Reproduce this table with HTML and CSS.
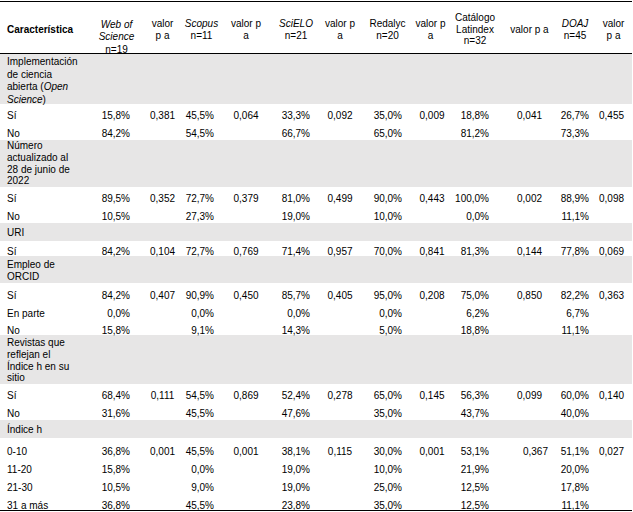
FILE: index.html
```html
<!DOCTYPE html>
<html lang="es">
<head>
<meta charset="utf-8">
<title>Características de las revistas</title>
<link rel="stylesheet" href="styles.css">
</head>
<body>
<table class="tbl">
  <colgroup>
    <col class="c1"><col class="c2"><col class="c3"><col class="c4"><col class="c5"><col class="c6"><col class="c7"><col class="c8"><col class="c9"><col class="c10"><col class="c11"><col class="c12"><col class="c13">
  </colgroup>
  <thead>
    <tr>
      <th class="first">Característica</th>
      <th class="wos"><span class="wos-in"><i>Web of</i><br><i>Science</i><br>n=19</span></th>
      <th>valor<br>p a</th>
      <th><i>Scopus</i><br>n=11</th>
      <th>valor p<br>a</th>
      <th><i>SciELO</i><br>n=21</th>
      <th>valor p<br>a</th>
      <th>Redalyc<br>n=20</th>
      <th>valor p<br>a</th>
      <th>Catálogo<br>Latindex<br>n=32</th>
      <th>valor p a</th>
      <th><i>DOAJ</i><br>n=45</th>
      <th>valor<br>p a</th>
    </tr>
  </thead>
  <tbody>
    <tr class="g"><td class="lbl lbl-os"><span class="os-in">Implementación<br>de ciencia<br>abierta (<i>Open</i><br><i>Science</i>)</span></td><td colspan="12"></td></tr>
    <tr class="d"><td>Sí</td><td>15,8%</td><td>0,381</td><td>45,5%</td><td>0,064</td><td>33,3%</td><td>0,092</td><td>35,0%</td><td>0,009</td><td>18,8%</td><td>0,041</td><td>26,7%</td><td>0,455</td></tr>
    <tr class="d"><td>No</td><td>84,2%</td><td></td><td>54,5%</td><td></td><td>66,7%</td><td></td><td>65,0%</td><td></td><td>81,2%</td><td></td><td>73,3%</td><td></td></tr>

    <tr class="g"><td class="lbl">Número actualizado al 28 de junio de 2022</td><td colspan="12"></td></tr>
    <tr class="d"><td>Sí</td><td>89,5%</td><td>0,352</td><td>72,7%</td><td>0,379</td><td>81,0%</td><td>0,499</td><td>90,0%</td><td>0,443</td><td>100,0%</td><td>0,002</td><td>88,9%</td><td>0,098</td></tr>
    <tr class="d"><td>No</td><td>10,5%</td><td></td><td>27,3%</td><td></td><td>19,0%</td><td></td><td>10,0%</td><td></td><td>0,0%</td><td></td><td>11,1%</td><td></td></tr>

    <tr class="g"><td class="lbl pt1">URI</td><td colspan="12"></td></tr>
    <tr class="d short low"><td>Sí</td><td>84,2%</td><td>0,104</td><td>72,7%</td><td>0,769</td><td>71,4%</td><td>0,957</td><td>70,0%</td><td>0,841</td><td>81,3%</td><td>0,144</td><td>77,8%</td><td>0,069</td></tr>

    <tr class="g"><td class="lbl pt3">Empleo de ORCID</td><td colspan="12"></td></tr>
    <tr class="d mid low"><td>Sí</td><td>84,2%</td><td>0,407</td><td>90,9%</td><td>0,450</td><td>85,7%</td><td>0,405</td><td>95,0%</td><td>0,208</td><td>75,0%</td><td>0,850</td><td>82,2%</td><td>0,363</td></tr>
    <tr class="d mid low"><td>En parte</td><td>0,0%</td><td></td><td>0,0%</td><td></td><td>0,0%</td><td></td><td>0,0%</td><td></td><td>6,2%</td><td></td><td>6,7%</td><td></td></tr>
    <tr class="d mid low"><td>No</td><td>15,8%</td><td></td><td>9,1%</td><td></td><td>14,3%</td><td></td><td>5,0%</td><td></td><td>18,8%</td><td></td><td>11,1%</td><td></td></tr>

    <tr class="g"><td class="lbl pt2">Revistas que reflejan el Índice h en su sitio</td><td colspan="12"></td></tr>
    <tr class="d"><td>Sí</td><td>68,4%</td><td>0,111</td><td>54,5%</td><td>0,869</td><td>52,4%</td><td>0,278</td><td>65,0%</td><td>0,145</td><td>56,3%</td><td>0,099</td><td>60,0%</td><td>0,140</td></tr>
    <tr class="d mid"><td>No</td><td>31,6%</td><td></td><td>45,5%</td><td></td><td>47,6%</td><td></td><td>35,0%</td><td></td><td>43,7%</td><td></td><td>40,0%</td><td></td></tr>

    <tr class="g"><td class="lbl pt3">Índice h</td><td colspan="12"></td></tr>
    <tr class="d low"><td>0-10</td><td>36,8%</td><td>0,001</td><td>45,5%</td><td>0,001</td><td>38,1%</td><td>0,115</td><td>30,0%</td><td>0,001</td><td>53,1%</td><td class="r">0,367</td><td>51,1%</td><td>0,027</td></tr>
    <tr class="d low"><td>11-20</td><td>15,8%</td><td></td><td>0,0%</td><td></td><td>19,0%</td><td></td><td>10,0%</td><td></td><td>21,9%</td><td></td><td>20,0%</td><td></td></tr>
    <tr class="d low"><td>21-30</td><td>10,5%</td><td></td><td>9,0%</td><td></td><td>19,0%</td><td></td><td>25,0%</td><td></td><td>12,5%</td><td></td><td>17,8%</td><td></td></tr>
    <tr class="d low last"><td>31 a más</td><td>36,8%</td><td></td><td>45,5%</td><td></td><td>23,8%</td><td></td><td>35,0%</td><td></td><td>12,5%</td><td></td><td>11,1%</td><td></td></tr>
  </tbody>
</table>
</body>
</html>
```

FILE: styles.css
```css
body {
  margin: 0;
  background: #ffffff;
  color: #000000;
  font-family: "Liberation Sans", Arial, sans-serif;
  font-size: 10px;
}

.tbl {
  width: 632px;
  margin-top: 1px;
  table-layout: fixed;
  border-collapse: separate;
  border-spacing: 0;
  line-height: 11.75px;
}

.c1 { width: 92px; }
.c2 { width: 49px; }
.c3 { width: 43px; }
.c4 { width: 35px; }
.c5 { width: 54px; }
.c6 { width: 46px; }
.c7 { width: 42px; }
.c8 { width: 53px; }
.c9 { width: 36px; }
.c10 { width: 50px; }
.c11 { width: 59px; }
.c12 { width: 32px; }
.c13 { width: 41px; }

/* header */
.tbl thead tr { height: 53px; }

.tbl th {
  font-weight: normal;
  text-align: center;
  vertical-align: middle;
  padding: 4px 0 0;
  border-top: 1px solid #000;
  border-bottom: 1px solid #000;
}

.tbl th.first {
  font-weight: bold;
  text-align: left;
  padding-left: 7px;
}

.tbl th:nth-child(9) { padding-right: 3px; }
.tbl th:nth-child(13) { padding-left: 4px; }

.tbl th.wos {
  vertical-align: bottom;
  padding-top: 0;
}

.wos-in {
  display: block;
  line-height: 12.5px;
  margin-bottom: -3px;
}

/* group rows */
.g { height: 18px; }

.g td {
  background: #e7e6e6;
  vertical-align: middle;
  padding: 0;
}

.g td.lbl {
  text-align: left;
  padding: 0 15px 0 7px;
}

.g td.pt1 { padding-top: 1px; }
.g td.pt2 { padding-top: 2px; }
.g td.pt3 { padding-top: 3px; }

.g td.lbl-os { padding-top: 2px; }

.os-in {
  display: block;
  line-height: 12.5px;
  margin-bottom: -2px;
}

/* data rows */
.d { height: 18px; }
.d.mid { height: 17.5px; }
.d.short { height: 15px; }
.d.last { height: 19px; }

.d td {
  vertical-align: bottom;
  padding: 0;
  white-space: nowrap;
}

.d.low td { line-height: 7.75px; }

.d td:nth-child(even) { text-align: right; }
.d td:nth-child(odd) { text-align: center; }

.d td:first-child {
  text-align: left;
  padding-left: 7px;
}

.d td:nth-child(2) { padding-right: 11px; }
.d td:nth-child(4) { padding-right: 5px; }
.d td:nth-child(6) { padding-right: 9px; }
.d td:nth-child(8) { padding-right: 12px; }
.d td:nth-child(10) { padding-right: 11px; }
.d td:nth-child(12) { padding-right: 2px; }

.d td.r {
  text-align: right;
  padding-right: 11px;
}

.d.last td { border-bottom: 1px solid #000; }
```
